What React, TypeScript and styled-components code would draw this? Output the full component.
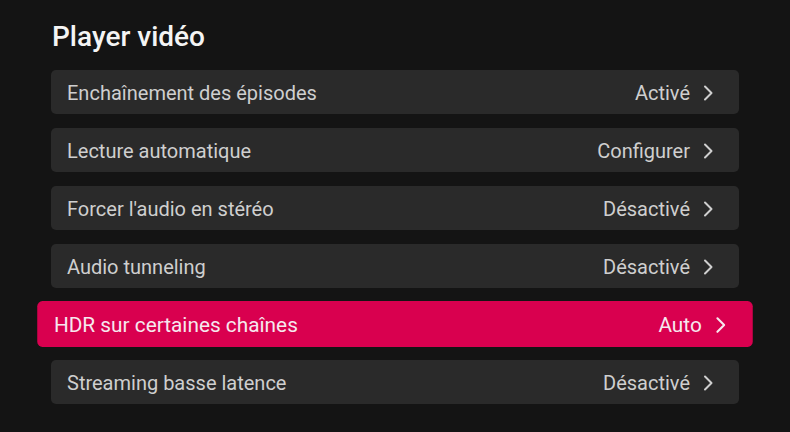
import React from "react";
import styled, { createGlobalStyle } from "styled-components";

const Global = createGlobalStyle`
  html, body { margin: 0; padding: 0; background: #141414; }
  body { font-family: Roboto, "Noto Sans", Arial, sans-serif; -webkit-font-smoothing: antialiased; }
`;

const Page = styled.div`
  width: 790px;
  height: 432px;
  background: #141414;
  overflow: hidden;
  box-sizing: border-box;
  padding: 21px 51px 0 51px;
`;

const Title = styled.h2`
  margin: 0 0 0 1px;
  font-size: 28px;
  line-height: 32px;
  font-weight: 500;
  color: #f4f4f4;
`;

const List = styled.div`
  margin-top: 17px;
  display: flex;
  flex-direction: column;
  gap: 14px;
  width: 688px;
`;

const Row = styled.div<{ $focused?: boolean }>`
  height: 44px;
  box-sizing: border-box;
  display: flex;
  align-items: center;
  justify-content: space-between;
  padding: 1px 26px 0 16px;
  border-radius: 5px;
  background: ${(p) => (p.$focused ? "#d9004f" : "#2a2a2a")};
  color: ${(p) => (p.$focused ? "#f6e8ee" : "#cfcfcf")};
  font-size: 20px;
  transform: ${(p) => (p.$focused ? "scale(1.04)" : "none")};
`;

const Label = styled.span`
  white-space: nowrap;
`;

const Value = styled.span`
  display: flex;
  align-items: center;
  gap: 13px;
  white-space: nowrap;
`;

const Chevron = () => (
  <svg width="10" height="16" viewBox="0 0 10 16" fill="none">
    <path d="M2 1.5 L8.5 8 L2 14.5" stroke="currentColor" strokeWidth="2" strokeLinecap="round" strokeLinejoin="round" />
  </svg>
);

const items = [
  { label: "Enchaînement des épisodes", value: "Activé" },
  { label: "Lecture automatique", value: "Configurer" },
  { label: "Forcer l'audio en stéréo", value: "Désactivé" },
  { label: "Audio tunneling", value: "Désactivé" },
  { label: "HDR sur certaines chaînes", value: "Auto", focused: true },
  { label: "Streaming basse latence", value: "Désactivé" },
];

export default function App() {
  return (
    <>
      <Global />
      <Page>
        <Title>Player vidéo</Title>
        <List>
          {items.map((it) => (
            <Row key={it.label} $focused={it.focused}>
              <Label>{it.label}</Label>
              <Value>
                {it.value}
                <Chevron />
              </Value>
            </Row>
          ))}
        </List>
      </Page>
    </>
  );
}
